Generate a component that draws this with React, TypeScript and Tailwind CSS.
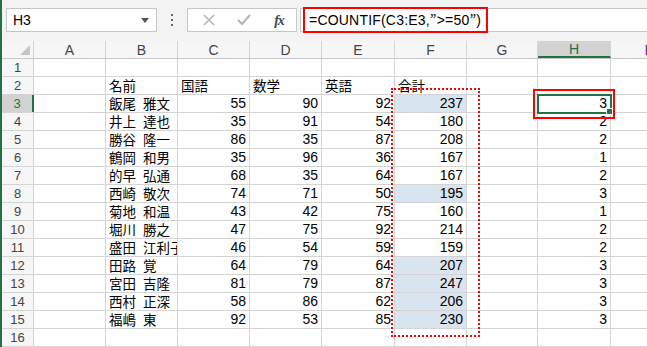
import React from "react";

const cols = ["A", "B", "C", "D", "E", "F", "G", "H", "I"];
const widths = [72, 72, 72, 72, 73, 72, 71, 73, 72];

type Row = [string, number, number, number, number, number];
const data: Row[] = [
  ["飯尾 雅文", 55, 90, 92, 237, 3],
  ["井上 達也", 35, 91, 54, 180, 2],
  ["勝谷 隆一", 86, 35, 87, 208, 2],
  ["鶴岡 和男", 35, 96, 36, 167, 1],
  ["的早 弘通", 68, 35, 64, 167, 2],
  ["西崎 敬次", 74, 71, 50, 195, 3],
  ["菊地 和温", 43, 42, 75, 160, 1],
  ["堀川 勝之", 47, 75, 92, 214, 2],
  ["盛田 江利子", 46, 54, 59, 159, 2],
  ["田路 覚", 64, 79, 64, 207, 3],
  ["宮田 吉隆", 81, 79, 87, 247, 3],
  ["西村 正深", 58, 86, 62, 206, 3],
  ["福嶋 東", 92, 53, 85, 230, 3],
];
const shaded = new Set([3, 8, 12, 13, 14, 15]);

const jp = { fontFamily: '"Noto Sans CJK JP", "Noto Sans", sans-serif' };
const num = { fontFamily: '"Liberation Sans", Arial, sans-serif' };

function Name({ v }: { v: string }) {
  const parts = v.split(" ");
  if (parts.length < 2) return <span>{v}</span>;
  return (
    <span className="flex">
      <span>{parts[0]}</span>
      <span className="w-[7px] shrink-0" />
      <span>{parts[1]}</span>
    </span>
  );
}

function Cell({
  w,
  children,
  align = "left",
  bg,
  font,
}: {
  w: number;
  children?: React.ReactNode;
  align?: "left" | "right";
  bg?: boolean;
  font?: "jp" | "num";
}) {
  return (
    <div
      className={`h-full shrink-0 border-r border-[#d4d4d4] overflow-hidden whitespace-nowrap flex items-center ${
        align === "right" ? "justify-end pr-[3px] text-[14px]" : "pl-[3px] text-[13.5px]"
      } ${bg ? "bg-[#d9e4f1]" : ""} text-black leading-[17px]`}
      style={{ width: w, ...(font === "jp" ? jp : num) }}
    >
      {children}
    </div>
  );
}

export default function App() {
  const rows: { n: number; cells: (React.ReactNode | null)[] }[] = [];
  for (let n = 1; n <= 16; n++) {
    let cells: (React.ReactNode | null)[] = Array(9).fill(null);
    if (n === 2) {
      cells = [null, "名前", "国語", "数学", "英語", "合計", null, null, null];
    } else if (n >= 3 && n <= 15) {
      const r = data[n - 3];
      cells = [null, <Name v={r[0]} />, r[1], r[2], r[3], r[4], null, r[5], null];
    }
    rows.push({ n, cells });
  }

  return (
    <div className="relative w-[647px] h-[347px] overflow-hidden bg-white border-l-2 border-[#217346]">
      {/* Top formula bar area */}
      <div className="h-[41px] bg-[#f3f3f3] flex items-start pt-[8px]">
        <div className="ml-[4px] w-[151px] h-[24px] bg-white border border-[#c6c6c6] flex items-center justify-between pl-[6px] pr-[7px]">
          <span className="text-[14px] text-black" style={num}>H3</span>
          <svg width="8" height="5" viewBox="0 0 8 5">
            <path d="M0 0 H8 L4 5 Z" fill="#555" />
          </svg>
        </div>
        <div className="w-[30px] h-[24px] flex flex-col items-center justify-center gap-[3px]">
          <span className="w-[2px] h-[2px] bg-[#666]" />
          <span className="w-[2px] h-[2px] bg-[#666]" />
          <span className="w-[2px] h-[2px] bg-[#666]" />
        </div>
        <div className="w-[110px] h-[24px] bg-white border border-[#c6c6c6] flex items-center">
          <div className="w-[38px] flex justify-center pl-[3px]">
            <svg width="12" height="12" viewBox="0 0 12 12">
              <path d="M1 1 L11 11 M11 1 L1 11" stroke="#b5b5b5" strokeWidth="1.5" />
            </svg>
          </div>
          <div className="w-[36px] flex justify-center">
            <svg width="14" height="12" viewBox="0 0 14 12">
              <path d="M1 6 L5 10 L13 1" stroke="#b5b5b5" strokeWidth="2.2" fill="none" />
            </svg>
          </div>
          <div className="flex-1 flex justify-center">
            <span
              className="text-[14px] italic font-bold text-[#444] tracking-[-1px]"
              style={{ fontFamily: '"Liberation Serif", "Times New Roman", serif' }}
            >
              fx
            </span>
          </div>
        </div>
        <div className="ml-[3px] flex-1 h-[24px] bg-white border border-[#c6c6c6] border-r-0 flex items-center pl-[8px]">
          <span className="text-[14px] text-black tracking-[0.2px] whitespace-nowrap" style={num}>
            =COUNTIF(C3:E3,<span style={jp}>”</span>&gt;=50<span style={jp}>”</span>)
          </span>
        </div>
      </div>

      {/* Column headers */}
      <div className="flex h-[18px] border-b border-[#c8c8c8] bg-[#f6f6f6]">
        <div className="w-[32px] shrink-0 h-full border-r border-[#d4d4d4] relative">
          <svg className="absolute right-[3px] bottom-[3px]" width="10" height="10" viewBox="0 0 10 10">
            <path d="M10 0 V10 H0 Z" fill="#c6c6c6" />
          </svg>
        </div>
        {cols.map((c, i) => (
          <div
            key={c}
            className={`shrink-0 h-full border-r border-[#d4d4d4] flex items-center justify-center text-[14px] leading-none ${
              c === "H"
                ? "bg-[#d2d2d2] text-[#217346] border-b-2 border-b-[#217346]"
                : c === "I"
                ? "text-[#5a2a6a]"
                : "text-[#444]"
            }`}
            style={{ width: widths[i], ...num }}
          >
            {c}
          </div>
        ))}
      </div>

      {/* Rows */}
      {rows.map(({ n, cells }) => (
        <div key={n} className="flex h-[18px] border-b border-[#d4d4d4]">
          <div
            className={`w-[32px] shrink-0 h-full flex items-center justify-center text-[13px] leading-none ${
              n === 3
                ? "bg-[#d2d2d2] text-[#217346] border-r-2 border-[#217346]"
                : "bg-[#f6f6f6] text-[#444] border-r border-[#d4d4d4]"
            }`}
            style={num}
          >
            {n}
          </div>
          {cells.map((v, i) => {
            const isNum = typeof v === "number";
            return (
              <Cell
                key={i}
                w={widths[i]}
                align={isNum ? "right" : "left"}
                bg={i === 5 && shaded.has(n)}
                font={isNum ? "num" : "jp"}
              >
                {v}
              </Cell>
            );
          })}
        </div>
      ))}

      {/* Red box around formula */}
      <div className="absolute left-[301px] top-[7px] w-[185px] h-[26px] border-2 border-[#ff0000] pointer-events-none" />

      {/* Selected cell H3 */}
      <div className="absolute left-[535px] top-[94px] w-[75px] h-[20px] border-2 border-[#217346] pointer-events-none" />
      <div className="absolute left-[604px] top-[108px] w-[7px] h-[7px] bg-[#217346] border border-white pointer-events-none" />
      {/* Red box around H3 */}
      <div className="absolute left-[531px] top-[89px] w-[82px] h-[30px] border-2 border-[#ff0000] pointer-events-none" />

      {/* Dotted red box around F column */}
      <div className="absolute left-[389px] top-[88px] w-[89px] h-[249px] border-2 border-dotted border-[#ff0000] pointer-events-none" />
    </div>
  );
}
